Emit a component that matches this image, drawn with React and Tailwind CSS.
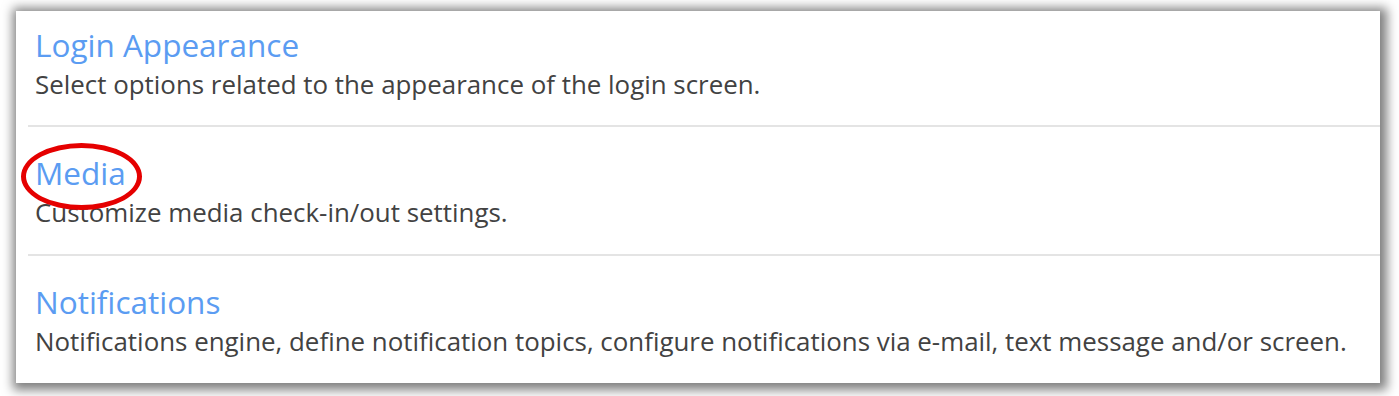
const items = [
  {
    title: "Login Appearance",
    desc: "Select options related to the appearance of the login screen.",
  },
  {
    title: "Media",
    desc: "Customize media check-in/out settings.",
    circled: true,
  },
  {
    title: "Notifications",
    desc: "Notifications engine, define notification topics, configure notifications via e-mail, text message and/or screen.",
  },
]

const SettingRow = ({ title, desc, circled, first, last }) => {
  var pad = first ? "pt-[16px] pb-[25px]" : "pt-[28px] pb-[26px]"
  return (
    <div className={"pl-[7px] " + pad + (last ? "" : " border-b-2 border-[#e4e4e4]")}>
      <div className="relative inline-block">
        <a className="block text-[31.5px] leading-[36px] text-[#5b9cf2] cursor-pointer">{title}</a>
        {/* red marker around the item */}
        {circled && (
          <div className="absolute left-[-14px] top-[-12px] w-[121px] h-[67px] rounded-[50%] border-[5px] border-[#e50000]"></div>
        )}
      </div>
      <p className="mt-[5px] text-[25.9px] leading-[32px] text-[#424242]">{desc}</p>
    </div>
  )
}

export default function App() {
  return (
    <div className="w-[1399px] h-[396px] bg-white pt-[11px] pl-[16px] font-['Open_Sans',sans-serif]">
      {/* the panel with the settings list */}
      <div className="w-[1364px] h-[372px] bg-white pl-[12px] shadow-[2px_2px_10px_5px_rgba(0,0,0,0.5)]">
        {items.map((item, i) => (
          <SettingRow key={item.title} {...item} first={i === 0} last={i === items.length - 1} />
        ))}
      </div>
    </div>
  )
}
